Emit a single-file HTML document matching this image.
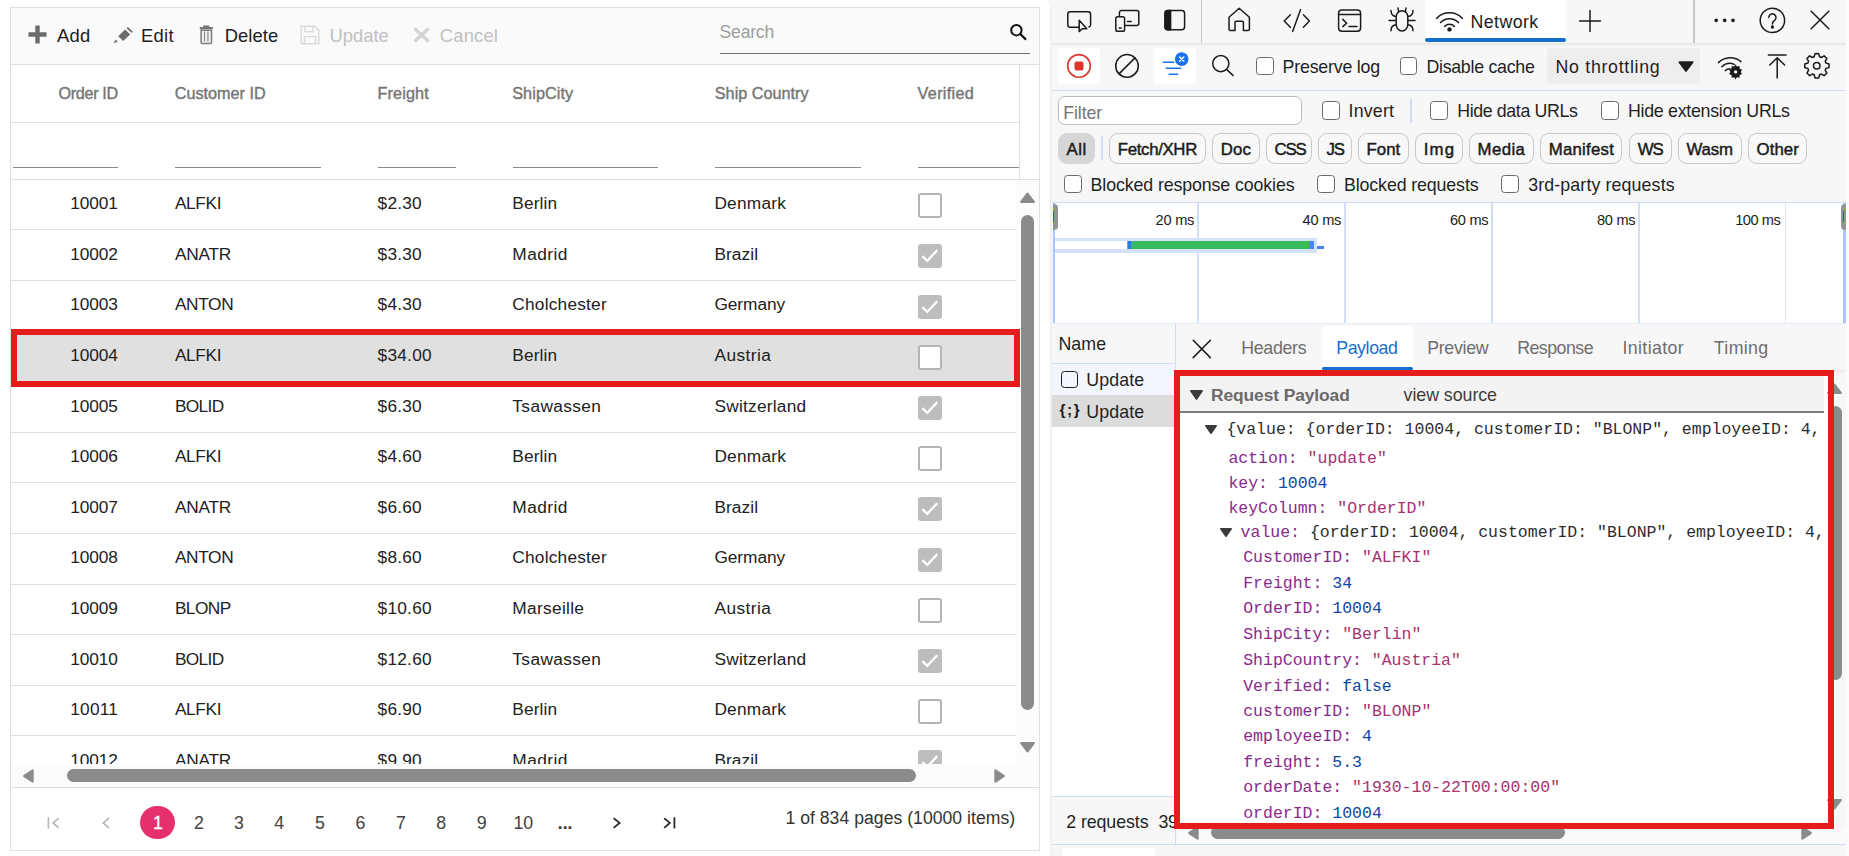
<!DOCTYPE html>
<html lang="en"><head><meta charset="utf-8"><title>Grid update - network payload</title>
<style>
html,body{margin:0;padding:0;background:#fff;}
body{width:1849px;height:856px;overflow:hidden;position:relative;font-family:"Liberation Sans", Arial, sans-serif;}
#root{position:absolute;left:0;top:0;width:1849px;height:856px;overflow:hidden;}
#root div{position:absolute;box-sizing:border-box;}
#root svg{position:absolute;overflow:visible;}
.t{position:absolute;white-space:pre;line-height:30px;height:30px;}

</style></head>
<body>
<div id="root">
<div style="left:0px;top:0px;width:1052px;height:856px;background:#fff;"></div>
<div style="left:10px;top:7px;width:1030px;height:844px;border:1px solid #e0e0e0;background:#fff;"></div>
<div style="left:11px;top:8px;width:1028px;height:56px;background:#fafafa;"></div>
<div style="left:11px;top:64px;width:1028px;height:1px;background:#e0e0e0;"></div>
<div style="left:11px;top:122px;width:1008px;height:1px;background:#e0e0e0;"></div>
<div style="left:11px;top:179px;width:1028px;height:1px;background:#e0e0e0;"></div>
<div style="left:1019px;top:65px;width:1px;height:115px;background:#e0e0e0;"></div>
<span class="t" style="left:57.0px;top:20.8px;font-size:18.4px;color:#212121;letter-spacing:0.283px;">Add</span>
<span class="t" style="left:141.0px;top:20.8px;font-size:18.4px;color:#212121;letter-spacing:0.266px;">Edit</span>
<span class="t" style="left:224.7px;top:20.8px;font-size:18.4px;color:#212121;letter-spacing:0.086px;">Delete</span>
<span class="t" style="left:329.5px;top:20.8px;font-size:18.4px;color:#c0c0c0;">Update</span>
<span class="t" style="left:439.8px;top:20.8px;font-size:18.4px;color:#c0c0c0;letter-spacing:0.170px;">Cancel</span>
<svg style="left:28px;top:25px" width="19" height="19" viewBox="0 0 19 19"><path d="M7.3 0.5h4.4v6.8h6.8v4.4h-6.8v6.8H7.3v-6.8H0.5V7.3h6.8z" fill="#6b6b6b"/></svg>
<svg style="left:112px;top:25px" width="22" height="20" viewBox="0 0 22 20"><path d="M6.2 11.2 L13.2 4.6 L18.2 9.4 L11.2 16 Z" fill="#6b6b6b"/><path d="M14.6 3.2 L15.9 2 L20.8 6.8 L19.6 8 Z" fill="#6b6b6b"/><path d="M4.8 12.8 L9.4 17.2 L2.2 18.6 Z" fill="#6b6b6b" opacity="0.0"/><path d="M1.6 18.4 L3.6 14.4 L5.6 16.6 Z" fill="#6b6b6b"/></svg>
<svg style="left:198px;top:24px" width="17" height="21" viewBox="0 0 17 21"><path d="M5.2 1.6h6.2v1.5h3.4v2.1H1.8V3.1h3.4z" fill="#757575"/><path d="M3.1 6.2h10.4v12.3a.9.9 0 0 1-.9.9H4a.9.9 0 0 1-.9-.9z" fill="#f2f2f2" stroke="#7d7d7d" stroke-width="1.5"/><path d="M6.55 7.6v10M9.95 7.6v10" stroke="#8a8a8a" stroke-width="1.2"/></svg>
<svg style="left:300px;top:25px" width="20" height="20" viewBox="0 0 20 20" fill="none" stroke="#dadada" stroke-width="1.4"><path d="M1.2 1.2h13.6l4 4v13.6H1.2z"/><path d="M5 1.2v5.6h8V1.2"/><path d="M4.4 18.6v-7h11.2v7"/></svg>
<svg style="left:412px;top:26px" width="19" height="18" viewBox="0 0 19 18"><path d="M2.6 2.4 L16.6 15.6M16.6 2.4 L2.6 15.6" stroke="#d4d4d4" stroke-width="3.4" fill="none"/></svg>
<span class="t" style="left:719.6px;top:16.5px;font-size:17.6px;color:#9e9e9e;letter-spacing:-0.230px;">Search</span>
<div style="left:720px;top:53px;width:310px;height:1px;background:#757575;"></div>
<svg style="left:1009px;top:23px" width="19" height="18" viewBox="0 0 19 18" fill="none" stroke="#111" stroke-width="2"><circle cx="7.4" cy="7.2" r="5.2"/><path d="M11.2 11 L17 16.6" stroke-width="2.2"/></svg>
<span class="t" style="left:58.6px;top:78.2px;font-size:16.2px;color:#757575;letter-spacing:-0.354px;-webkit-text-stroke:0.4px #757575;">Order ID</span>
<span class="t" style="left:174.8px;top:78.2px;font-size:16.2px;color:#757575;-webkit-text-stroke:0.4px #757575;">Customer ID</span>
<span class="t" style="left:377.4px;top:78.2px;font-size:16.2px;color:#757575;letter-spacing:0.168px;-webkit-text-stroke:0.4px #757575;">Freight</span>
<span class="t" style="left:512.2px;top:78.2px;font-size:16.2px;color:#757575;letter-spacing:0.103px;-webkit-text-stroke:0.4px #757575;">ShipCity</span>
<span class="t" style="left:714.8px;top:78.2px;font-size:16.2px;color:#757575;letter-spacing:0.020px;-webkit-text-stroke:0.4px #757575;">Ship Country</span>
<span class="t" style="left:917.6px;top:78.2px;font-size:16.2px;color:#757575;letter-spacing:0.314px;-webkit-text-stroke:0.4px #757575;">Verified</span>
<div style="left:13px;top:167px;width:105px;height:1px;background:#8a8a8a;"></div>
<div style="left:175px;top:167px;width:145.5px;height:1px;background:#8a8a8a;"></div>
<div style="left:378px;top:167px;width:77.69999999999999px;height:1px;background:#8a8a8a;"></div>
<div style="left:513px;top:167px;width:144.60000000000002px;height:1px;background:#8a8a8a;"></div>
<div style="left:715px;top:167px;width:146px;height:1px;background:#8a8a8a;"></div>
<div style="left:918px;top:167px;width:101px;height:1px;background:#8a8a8a;"></div>
<div style="left:11px;top:180px;width:1005px;height:584px;overflow:hidden;"><div style="left:0;top:49.4px;width:1006px;height:1px;background:#e0e0e0;"></div><div style="left:907px;top:13.4px;width:24px;height:24.6px;border-radius:3px;background:#fff;border:2px solid #b4b4b4;"></div><div style="left:0;top:100.0px;width:1006px;height:1px;background:#e0e0e0;"></div><div style="left:907px;top:64.0px;width:24px;height:24px;border-radius:3px;background:#bdbdbd;"></div><svg style="left:907px;top:64.0px" width="24" height="24" viewBox="0 0 24 24"><path d="M4.4 12.2 L9.3 16.8 L19.2 6.2" fill="none" stroke="#fff" stroke-width="2.3"/></svg><div style="left:0;top:150.6px;width:1006px;height:1px;background:#e0e0e0;"></div><div style="left:907px;top:114.6px;width:24px;height:24px;border-radius:3px;background:#bdbdbd;"></div><svg style="left:907px;top:114.6px" width="24" height="24" viewBox="0 0 24 24"><path d="M4.4 12.2 L9.3 16.8 L19.2 6.2" fill="none" stroke="#fff" stroke-width="2.3"/></svg><div style="left:0;top:150.6px;width:1006px;height:51.2px;background:#e0e0e0;"></div><div style="left:0;top:201.2px;width:1006px;height:1px;background:#e0e0e0;"></div><div style="left:907px;top:165.2px;width:24px;height:24.6px;border-radius:3px;background:#fff;border:2px solid #b4b4b4;"></div><div style="left:0;top:251.8px;width:1006px;height:1px;background:#e0e0e0;"></div><div style="left:907px;top:215.8px;width:24px;height:24px;border-radius:3px;background:#bdbdbd;"></div><svg style="left:907px;top:215.8px" width="24" height="24" viewBox="0 0 24 24"><path d="M4.4 12.2 L9.3 16.8 L19.2 6.2" fill="none" stroke="#fff" stroke-width="2.3"/></svg><div style="left:0;top:302.4px;width:1006px;height:1px;background:#e0e0e0;"></div><div style="left:907px;top:266.4px;width:24px;height:24.6px;border-radius:3px;background:#fff;border:2px solid #b4b4b4;"></div><div style="left:0;top:353.0px;width:1006px;height:1px;background:#e0e0e0;"></div><div style="left:907px;top:317.0px;width:24px;height:24px;border-radius:3px;background:#bdbdbd;"></div><svg style="left:907px;top:317.0px" width="24" height="24" viewBox="0 0 24 24"><path d="M4.4 12.2 L9.3 16.8 L19.2 6.2" fill="none" stroke="#fff" stroke-width="2.3"/></svg><div style="left:0;top:403.6px;width:1006px;height:1px;background:#e0e0e0;"></div><div style="left:907px;top:367.6px;width:24px;height:24px;border-radius:3px;background:#bdbdbd;"></div><svg style="left:907px;top:367.6px" width="24" height="24" viewBox="0 0 24 24"><path d="M4.4 12.2 L9.3 16.8 L19.2 6.2" fill="none" stroke="#fff" stroke-width="2.3"/></svg><div style="left:0;top:454.2px;width:1006px;height:1px;background:#e0e0e0;"></div><div style="left:907px;top:418.2px;width:24px;height:24.6px;border-radius:3px;background:#fff;border:2px solid #b4b4b4;"></div><div style="left:0;top:504.8px;width:1006px;height:1px;background:#e0e0e0;"></div><div style="left:907px;top:468.8px;width:24px;height:24px;border-radius:3px;background:#bdbdbd;"></div><svg style="left:907px;top:468.8px" width="24" height="24" viewBox="0 0 24 24"><path d="M4.4 12.2 L9.3 16.8 L19.2 6.2" fill="none" stroke="#fff" stroke-width="2.3"/></svg><div style="left:0;top:555.4px;width:1006px;height:1px;background:#e0e0e0;"></div><div style="left:907px;top:519.4px;width:24px;height:24.6px;border-radius:3px;background:#fff;border:2px solid #b4b4b4;"></div><div style="left:0;top:606.0px;width:1006px;height:1px;background:#e0e0e0;"></div><div style="left:907px;top:570.0px;width:24px;height:24px;border-radius:3px;background:#bdbdbd;"></div><svg style="left:907px;top:570.0px" width="24" height="24" viewBox="0 0 24 24"><path d="M4.4 12.2 L9.3 16.8 L19.2 6.2" fill="none" stroke="#fff" stroke-width="2.3"/></svg></div>
<span class="t" style="left:70.3px;top:188.2px;font-size:17.3px;color:#212121;letter-spacing:-0.116px;">10001</span>
<span class="t" style="left:174.9px;top:188.2px;font-size:17.3px;color:#212121;letter-spacing:-0.358px;">ALFKI</span>
<span class="t" style="left:377.6px;top:188.2px;font-size:17.3px;color:#212121;letter-spacing:0.213px;">$2.30</span>
<span class="t" style="left:512.3px;top:188.2px;font-size:17.3px;color:#212121;letter-spacing:0.143px;">Berlin</span>
<span class="t" style="left:714.4px;top:188.2px;font-size:17.3px;color:#212121;letter-spacing:0.232px;">Denmark</span>
<span class="t" style="left:70.3px;top:238.8px;font-size:17.3px;color:#212121;letter-spacing:-0.116px;">10002</span>
<span class="t" style="left:174.9px;top:238.8px;font-size:17.3px;color:#212121;letter-spacing:-0.224px;">ANATR</span>
<span class="t" style="left:377.6px;top:238.8px;font-size:17.3px;color:#212121;letter-spacing:0.213px;">$3.30</span>
<span class="t" style="left:512.3px;top:238.8px;font-size:17.3px;color:#212121;letter-spacing:0.454px;">Madrid</span>
<span class="t" style="left:714.4px;top:238.8px;font-size:17.3px;color:#212121;letter-spacing:0.096px;">Brazil</span>
<span class="t" style="left:70.3px;top:289.4px;font-size:17.3px;color:#212121;letter-spacing:-0.116px;">10003</span>
<span class="t" style="left:174.9px;top:289.4px;font-size:17.3px;color:#212121;letter-spacing:-0.347px;">ANTON</span>
<span class="t" style="left:377.6px;top:289.4px;font-size:17.3px;color:#212121;letter-spacing:0.213px;">$4.30</span>
<span class="t" style="left:512.3px;top:289.4px;font-size:17.3px;color:#212121;letter-spacing:0.218px;">Cholchester</span>
<span class="t" style="left:714.4px;top:289.4px;font-size:17.3px;color:#212121;letter-spacing:-0.046px;">Germany</span>
<span class="t" style="left:70.3px;top:340.0px;font-size:17.3px;color:#212121;letter-spacing:-0.116px;">10004</span>
<span class="t" style="left:174.9px;top:340.0px;font-size:17.3px;color:#212121;letter-spacing:-0.358px;">ALFKI</span>
<span class="t" style="left:377.6px;top:340.0px;font-size:17.3px;color:#212121;letter-spacing:0.228px;">$34.00</span>
<span class="t" style="left:512.3px;top:340.0px;font-size:17.3px;color:#212121;letter-spacing:0.143px;">Berlin</span>
<span class="t" style="left:714.4px;top:340.0px;font-size:17.3px;color:#212121;letter-spacing:0.467px;">Austria</span>
<span class="t" style="left:70.3px;top:390.6px;font-size:17.3px;color:#212121;letter-spacing:-0.116px;">10005</span>
<span class="t" style="left:174.9px;top:390.6px;font-size:17.3px;color:#212121;letter-spacing:-0.644px;">BOLID</span>
<span class="t" style="left:377.6px;top:390.6px;font-size:17.3px;color:#212121;letter-spacing:0.213px;">$6.30</span>
<span class="t" style="left:512.3px;top:390.6px;font-size:17.3px;color:#212121;letter-spacing:0.400px;">Tsawassen</span>
<span class="t" style="left:714.4px;top:390.6px;font-size:17.3px;color:#212121;letter-spacing:0.247px;">Switzerland</span>
<span class="t" style="left:70.3px;top:441.2px;font-size:17.3px;color:#212121;letter-spacing:-0.116px;">10006</span>
<span class="t" style="left:174.9px;top:441.2px;font-size:17.3px;color:#212121;letter-spacing:-0.358px;">ALFKI</span>
<span class="t" style="left:377.6px;top:441.2px;font-size:17.3px;color:#212121;letter-spacing:0.213px;">$4.60</span>
<span class="t" style="left:512.3px;top:441.2px;font-size:17.3px;color:#212121;letter-spacing:0.143px;">Berlin</span>
<span class="t" style="left:714.4px;top:441.2px;font-size:17.3px;color:#212121;letter-spacing:0.232px;">Denmark</span>
<span class="t" style="left:70.3px;top:491.8px;font-size:17.3px;color:#212121;letter-spacing:-0.116px;">10007</span>
<span class="t" style="left:174.9px;top:491.8px;font-size:17.3px;color:#212121;letter-spacing:-0.224px;">ANATR</span>
<span class="t" style="left:377.6px;top:491.8px;font-size:17.3px;color:#212121;letter-spacing:0.213px;">$6.60</span>
<span class="t" style="left:512.3px;top:491.8px;font-size:17.3px;color:#212121;letter-spacing:0.454px;">Madrid</span>
<span class="t" style="left:714.4px;top:491.8px;font-size:17.3px;color:#212121;letter-spacing:0.096px;">Brazil</span>
<span class="t" style="left:70.3px;top:542.4px;font-size:17.3px;color:#212121;letter-spacing:-0.116px;">10008</span>
<span class="t" style="left:174.9px;top:542.4px;font-size:17.3px;color:#212121;letter-spacing:-0.347px;">ANTON</span>
<span class="t" style="left:377.6px;top:542.4px;font-size:17.3px;color:#212121;letter-spacing:0.213px;">$8.60</span>
<span class="t" style="left:512.3px;top:542.4px;font-size:17.3px;color:#212121;letter-spacing:0.218px;">Cholchester</span>
<span class="t" style="left:714.4px;top:542.4px;font-size:17.3px;color:#212121;letter-spacing:-0.046px;">Germany</span>
<span class="t" style="left:70.3px;top:593.0px;font-size:17.3px;color:#212121;letter-spacing:-0.116px;">10009</span>
<span class="t" style="left:174.9px;top:593.0px;font-size:17.3px;color:#212121;letter-spacing:-0.548px;">BLONP</span>
<span class="t" style="left:377.6px;top:593.0px;font-size:17.3px;color:#212121;letter-spacing:0.228px;">$10.60</span>
<span class="t" style="left:512.3px;top:593.0px;font-size:17.3px;color:#212121;letter-spacing:0.318px;">Marseille</span>
<span class="t" style="left:714.4px;top:593.0px;font-size:17.3px;color:#212121;letter-spacing:0.467px;">Austria</span>
<span class="t" style="left:70.3px;top:643.6px;font-size:17.3px;color:#212121;letter-spacing:-0.116px;">10010</span>
<span class="t" style="left:174.9px;top:643.6px;font-size:17.3px;color:#212121;letter-spacing:-0.644px;">BOLID</span>
<span class="t" style="left:377.6px;top:643.6px;font-size:17.3px;color:#212121;letter-spacing:0.228px;">$12.60</span>
<span class="t" style="left:512.3px;top:643.6px;font-size:17.3px;color:#212121;letter-spacing:0.400px;">Tsawassen</span>
<span class="t" style="left:714.4px;top:643.6px;font-size:17.3px;color:#212121;letter-spacing:0.247px;">Switzerland</span>
<span class="t" style="left:70.3px;top:694.2px;font-size:17.3px;color:#212121;letter-spacing:0.205px;">10011</span>
<span class="t" style="left:174.9px;top:694.2px;font-size:17.3px;color:#212121;letter-spacing:-0.358px;">ALFKI</span>
<span class="t" style="left:377.6px;top:694.2px;font-size:17.3px;color:#212121;letter-spacing:0.213px;">$6.90</span>
<span class="t" style="left:512.3px;top:694.2px;font-size:17.3px;color:#212121;letter-spacing:0.143px;">Berlin</span>
<span class="t" style="left:714.4px;top:694.2px;font-size:17.3px;color:#212121;letter-spacing:0.232px;">Denmark</span>
<span class="t" style="left:70.3px;top:744.8px;font-size:17.3px;color:#212121;letter-spacing:-0.116px;">10012</span>
<span class="t" style="left:174.9px;top:744.8px;font-size:17.3px;color:#212121;letter-spacing:-0.224px;">ANATR</span>
<span class="t" style="left:377.6px;top:744.8px;font-size:17.3px;color:#212121;letter-spacing:0.213px;">$9.90</span>
<span class="t" style="left:512.3px;top:744.8px;font-size:17.3px;color:#212121;letter-spacing:0.454px;">Madrid</span>
<span class="t" style="left:714.4px;top:744.8px;font-size:17.3px;color:#212121;letter-spacing:0.096px;">Brazil</span>
<div style="left:1016px;top:180px;width:23px;height:607px;background:#fcfcfc;"></div>
<div style="left:11px;top:764px;width:1028px;height:23px;background:#fcfcfc;"></div>
<div style="left:1021px;top:215px;width:13px;height:495.4px;background:#8b8b8b;border-radius:7px;"></div>
<svg style="left:1019px;top:192px" width="17" height="12" viewBox="0 0 17 12"><path d="M8.5 1.6 L14.8 10 L2.2 10 Z" fill="#8b8b8b" stroke="#8b8b8b" stroke-linejoin="round" stroke-width="2.2"/></svg>
<svg style="left:1019px;top:741px" width="17" height="12" viewBox="0 0 17 12"><path d="M8.5 10.4 L14.8 2 L2.2 2 Z" fill="#8b8b8b" stroke="#8b8b8b" stroke-linejoin="round" stroke-width="2.2"/></svg>
<div style="left:67px;top:768.9px;width:849px;height:12.9px;background:#8b8b8b;border-radius:7px;"></div>
<svg style="left:22px;top:768px" width="13" height="16" viewBox="0 0 13 16"><path d="M2.2 8 L10.6 2.4 L10.6 13.6 Z" fill="#8b8b8b" stroke="#8b8b8b" stroke-linejoin="round" stroke-width="2.2"/></svg>
<svg style="left:993px;top:768px" width="13" height="16" viewBox="0 0 13 16"><path d="M10.8 8 L2.4 2.4 L2.4 13.6 Z" fill="#8b8b8b" stroke="#8b8b8b" stroke-linejoin="round" stroke-width="2.2"/></svg>
<div style="left:11px;top:787px;width:1028px;height:1px;background:#e0e0e0;"></div>
<div style="left:140.2px;top:805.6px;width:34.6px;height:33.6px;background:#e5306d;border-radius:50%;"></div>
<span class="t" style="left:152.9px;top:808.0px;font-size:17.8px;color:#fff;-webkit-text-stroke:0.3px #fff;">1</span>
<span class="t" style="left:193.9px;top:808.0px;font-size:17.8px;color:#424242;">2</span>
<span class="t" style="left:233.9px;top:808.0px;font-size:17.8px;color:#424242;">3</span>
<span class="t" style="left:274.3px;top:808.0px;font-size:17.8px;color:#424242;">4</span>
<span class="t" style="left:314.9px;top:808.0px;font-size:17.8px;color:#424242;">5</span>
<span class="t" style="left:355.5px;top:808.0px;font-size:17.8px;color:#424242;">6</span>
<span class="t" style="left:395.9px;top:808.0px;font-size:17.8px;color:#424242;">7</span>
<span class="t" style="left:436.3px;top:808.0px;font-size:17.8px;color:#424242;">8</span>
<span class="t" style="left:476.7px;top:808.0px;font-size:17.8px;color:#424242;">9</span>
<span class="t" style="left:513.6px;top:808.0px;font-size:17.8px;color:#424242;letter-spacing:-0.181px;">10</span>
<span class="t" style="left:557.5px;top:808.2px;font-size:19px;color:#424242;font-weight:700;letter-spacing:-0.38px;">...</span>
<svg style="left:40px;top:810px" width="26" height="26" viewBox="0 0 26 26" fill="none" stroke="#b8b8b8" stroke-width="1.7"><path d="M8.4 7.3v11.4"/><path d="M18.7 8.1 L13 13 L18.7 17.9"/></svg>
<svg style="left:95px;top:810px" width="26" height="26" viewBox="0 0 26 26" fill="none" stroke="#b8b8b8" stroke-width="1.7"><path d="M14 8.1 L8.2 13 L14 17.9"/></svg>
<svg style="left:605px;top:810px" width="26" height="26" viewBox="0 0 26 26" fill="none" stroke="#2a2a2a" stroke-width="1.8"><path d="M8.6 8.2 L14.6 12.9 L8.6 17.9"/></svg>
<svg style="left:655px;top:810px" width="26" height="26" viewBox="0 0 26 26" fill="none" stroke="#2a2a2a" stroke-width="1.8"><path d="M9.2 8.2 L14.8 12.9 L9.2 17.9"/><path d="M19.4 7.3v11.1"/></svg>
<span class="t" style="left:785.4px;top:803.4px;font-size:17.6px;color:#333;letter-spacing:0.034px;">1 of 834 pages (10000 items)</span>
<div style="left:11px;top:328.6px;width:1009px;height:58.6px;border:6px solid #e51c1c;"></div>
<div style="left:1040px;top:0px;width:13px;height:20px;background:#f5f5f5;"></div>
<div style="left:1040px;top:0px;width:10.2px;height:40px;background:#fff;border-radius:0 6px 0 0;"></div>
<div style="left:1050px;top:6px;width:2.4px;height:850px;background:#f0f0f0;"></div>
<div style="left:1052px;top:0px;width:797px;height:856px;background:#f7f7f7;"></div>
<div style="left:1846px;top:0px;width:3px;height:856px;background:#fbfbfb;"></div>
<div style="left:1052px;top:0px;width:794px;height:43px;background:#f7f7f7;"></div>
<div style="left:1052px;top:43px;width:794px;height:4px;background:linear-gradient(180deg,#e4e4e4,#f2f2f2 60%,#f7f7f7);"></div>
<div style="left:1200.6px;top:0px;width:1.4px;height:43px;background:#c9c9c9;"></div>
<div style="left:1693.4px;top:0px;width:1.6px;height:43px;background:#c6c6c6;"></div>
<div style="left:1425px;top:0px;width:141px;height:42px;background:#fff;border-radius:0 0 3px 3px;"></div>
<div style="left:1425px;top:38px;width:141px;height:4px;background:#1470cc;border-radius:2px;"></div>
<svg style="left:1064px;top:6px" width="30" height="30" viewBox="0 0 30 30" fill="none" stroke="#1b1b1b" stroke-width="1.5" stroke-linecap="round" stroke-linejoin="round" ><path d="M15.5 21.2H6.2a2.4 2.4 0 0 1-2.4-2.4V8.2a2.4 2.4 0 0 1 2.4-2.4h18a2.4 2.4 0 0 1 2.4 2.4v10.6a2.4 2.4 0 0 1-1.6 2.2"/><path d="M15.2 14.2v11.4l3-2.9h4.6z" fill="#f7f7f7"/></svg>
<svg style="left:1112px;top:6px" width="30" height="30" viewBox="0 0 30 30" fill="none" stroke="#1b1b1b" stroke-width="1.5" stroke-linecap="round" stroke-linejoin="round" ><path d="M7.4 9.6V6.6a2 2 0 0 1 2-2h15.4a2 2 0 0 1 2 2v11a2 2 0 0 1-2 2H13"/><rect x="3.8" y="10.8" width="8.8" height="14.4" rx="1.8" fill="#f7f7f7"/><path d="M7.2 22h2M15.6 15.6h3.6"/></svg>
<svg style="left:1160px;top:6px" width="30" height="30" viewBox="0 0 30 30" fill="none" stroke="#1b1b1b" stroke-width="1.5" stroke-linecap="round" stroke-linejoin="round" ><rect x="5" y="4.4" width="19.6" height="19.4" rx="3"/><path d="M8 4.4h2.6v19.4H8a3 3 0 0 1-3-3V7.4a3 3 0 0 1 3-3z" fill="#1b1b1b"/></svg>
<svg style="left:1224px;top:4px" width="30" height="30" viewBox="0 0 30 30" fill="none" stroke="#1b1b1b" stroke-width="1.5" stroke-linecap="round" stroke-linejoin="round" ><path d="M5 13.2 L15.2 4.2 L25.4 13.2 V25.2a1.2 1.2 0 0 1-1.2 1.2H19.4V18.4a1.2 1.2 0 0 0-1.2-1.2H12.2a1.2 1.2 0 0 0-1.2 1.2V26.4H6.2A1.2 1.2 0 0 1 5 25.2Z"/></svg>
<svg style="left:1281px;top:6px" width="32" height="30" viewBox="0 0 32 30" fill="none" stroke="#1b1b1b" stroke-width="1.5" stroke-linecap="round" stroke-linejoin="round" ><path d="M9.4 8.8 L3.2 15 L9.4 21.2M22.4 8.8 L28.4 15 L22.4 21.2M19.6 3.6 L11.6 25.4"/></svg>
<svg style="left:1335px;top:6px" width="30" height="30" viewBox="0 0 30 30" fill="none" stroke="#1b1b1b" stroke-width="1.5" stroke-linecap="round" stroke-linejoin="round" ><rect x="3.6" y="4" width="22" height="21.2" rx="3.2"/><path d="M3.6 8.4h22M7.8 13.4 L11.6 17.2 L7.8 20.6M14 20.4h8"/></svg>
<svg style="left:1386px;top:4px" width="32" height="30" viewBox="0 0 32 30" fill="none" stroke="#1b1b1b" stroke-width="1.5" stroke-linecap="round" stroke-linejoin="round" ><path d="M10.2 12.8a5.8 6 0 0 1 11.6 0v7.6a5.8 6.6 0 0 1-11.6 0z"/><path d="M12.6 7.6 L12 4M19.4 7.6 L20 4M10.2 16.6H3M21.8 16.6H29M10.2 12.6 C6.4 12.4 5 10.4 5 6.6M21.8 12.6 C25.6 12.4 27 10.4 27 6.6M10.4 20.8 C6.4 21 5 23 5 26.8M21.6 20.8 C25.6 21 27 23 27 26.8"/></svg>
<svg style="left:1434px;top:8px" width="32" height="26" viewBox="0 0 32 26" fill="none" stroke="#1b1b1b" stroke-width="1.5" stroke-linecap="round" stroke-linejoin="round" stroke-width="1.95"><path d="M2.6 10.4a17.6 17.6 0 0 1 25.8 0M6.6 14.6a12 12 0 0 1 17.8 0M10.6 18.4a6.6 6.6 0 0 1 9.8 0"/><circle cx="15.5" cy="21.4" r="2.2" fill="#1b1b1b" stroke="none"/></svg>
<span class="t" style="left:1470.6px;top:6.6px;font-size:17.8px;color:#1b1b1b;letter-spacing:0.397px;">Network</span>
<svg style="left:1578px;top:9px" width="24" height="24" viewBox="0 0 24 24" fill="none" stroke="#1b1b1b" stroke-width="1.5" stroke-linecap="round" stroke-linejoin="round" ><path d="M12 1.6v20.8M1.6 12h20.8"/></svg>
<svg style="left:1712px;top:16px" width="26" height="9" viewBox="0 0 26 9"><circle cx="4.2" cy="4.4" r="1.8" fill="#1b1b1b"/><circle cx="12.7" cy="4.4" r="1.8" fill="#1b1b1b"/><circle cx="21" cy="4.4" r="1.8" fill="#1b1b1b"/></svg>
<svg style="left:1758px;top:6px" width="30" height="30" viewBox="0 0 30 30" fill="none" stroke="#1b1b1b" stroke-width="1.5" stroke-linecap="round" stroke-linejoin="round" stroke-width="1.35"><circle cx="14.4" cy="14.4" r="12.2"/><path d="M10.8 11.4a3.6 3.6 0 1 1 5.8 2.9c-1.4 1.1-2.2 1.7-2.2 3.7"/><circle cx="14.4" cy="21" r="0.9" fill="#1b1b1b"/></svg>
<svg style="left:1809px;top:9px" width="22" height="22" viewBox="0 0 22 22" fill="none" stroke="#1b1b1b" stroke-width="1.5" stroke-linecap="round" stroke-linejoin="round" ><path d="M2.2 2.2 L19.8 19.8M19.8 2.2 L2.2 19.8"/></svg>
<div style="left:1058px;top:48.3px;width:42px;height:35.5px;background:#fff;border-radius:3px;"></div>
<svg style="left:1066px;top:53px" width="26" height="26" viewBox="0 0 26 26"><circle cx="13" cy="12.9" r="11.3" fill="none" stroke="#dc362e" stroke-width="1.6"/><rect x="8.5" y="8.4" width="9" height="9" rx="2" fill="#dc362e"/></svg>
<svg style="left:1114px;top:53px" width="26" height="26" viewBox="0 0 26 26" fill="none" stroke="#1b1b1b" stroke-width="1.5" stroke-linecap="round" stroke-linejoin="round" ><circle cx="13" cy="12.9" r="11.3"/><path d="M5 20.9 L21 4.9"/></svg>
<div style="left:1154px;top:48.3px;width:42px;height:35.5px;background:#fff;border-radius:3px;"></div>
<svg style="left:1160px;top:50px" width="32" height="30" viewBox="0 0 32 30"><path d="M3.2 12.2h10.6M6.2 18.2h14.6M9.2 24.2h8.4" stroke="#1a73e8" stroke-width="1.5" stroke-linecap="round" fill="none"/><circle cx="21.7" cy="9.1" r="6.8" fill="#1a73e8"/><path d="M19.6 7 L23.8 11.2M23.8 7 L19.6 11.2" stroke="#fff" stroke-width="1.4" stroke-linecap="round" fill="none"/></svg>
<svg style="left:1208px;top:52px" width="30" height="28" viewBox="0 0 30 28" fill="none" stroke="#1b1b1b" stroke-width="1.5" stroke-linecap="round" stroke-linejoin="round" stroke-width="1.6"><circle cx="12.8" cy="11.6" r="8.1"/><path d="M18.8 17.6 L25 23.4"/></svg>
<div style="left:1256.4px;top:57.2px;width:17.4px;height:17.4px;background:#fff;border:1.7px solid #6a6a6a;border-radius:3.5px;"></div>
<span class="t" style="left:1282.6px;top:52.0px;font-size:17.8px;color:#1f1f1f;letter-spacing:-0.203px;">Preserve log</span>
<div style="left:1400px;top:57.2px;width:17.4px;height:17.4px;background:#fff;border:1.7px solid #6a6a6a;border-radius:3.5px;"></div>
<span class="t" style="left:1426.4px;top:52.0px;font-size:17.8px;color:#1f1f1f;letter-spacing:-0.275px;">Disable cache</span>
<div style="left:1546.7px;top:48.3px;width:153.2px;height:35.5px;background:#eeeeee;border-radius:3px;"></div>
<span class="t" style="left:1555.6px;top:52.0px;font-size:17.8px;color:#1f1f1f;letter-spacing:0.677px;">No throttling</span>
<svg style="left:1677px;top:60px" width="18" height="13" viewBox="0 0 18 13"><path d="M2.4 2.2h13.2L9 11z" fill="#1b1b1b" stroke="#1b1b1b" stroke-width="1.8" stroke-linejoin="round"/></svg>
<svg style="left:1715px;top:54px" width="30" height="27" viewBox="0 0 30 27" fill="none" stroke="#1b1b1b" stroke-width="1.5" stroke-linecap="round" stroke-linejoin="round" ><path d="M3.4 8.6a17 17 0 0 1 22.6-1M6.8 12.8a11.4 11.4 0 0 1 12.4-2.4M10.4 16.6a6 6 0 0 1 4.6-1.8"/><path d="M20.4 11.8l1.3 2.3 2.6-.5.2 2.7 2.5 1-1.5 2.2 1.5 2.2-2.5 1-.2 2.7-2.6-.5-1.3 2.3-1.3-2.3-2.6.5-.2-2.7-2.5-1 1.5-2.2-1.5-2.2 2.5-1 .2-2.7 2.6.5z" fill="#1b1b1b" stroke="none" transform="translate(0.2,-1.6)"/><circle cx="20.6" cy="17.9" r="1.7" fill="#f7f7f7" stroke="none"/></svg>
<svg style="left:1765px;top:52px" width="24" height="28" viewBox="0 0 24 28" fill="none" stroke="#1b1b1b" stroke-width="1.5" stroke-linecap="round" stroke-linejoin="round" stroke-width="1.4"><path d="M3.4 2.9h17.6M12.2 26V6.4M4.8 13 L12.2 5.8 L19.6 13"/></svg>
<svg style="left:1803px;top:52px" width="28" height="28" viewBox="0 0 24 24" fill="none" stroke="#1b1b1b" stroke-width="1.3" stroke-linejoin="round"><path d="M12 1.6l1.7.2.7 2.7 1.5.6 2.4-1.4 2.3 2.3-1.4 2.4.6 1.5 2.7.7v3.2l-2.7.7-.6 1.5 1.4 2.4-2.3 2.3-2.4-1.4-1.5.6-.7 2.7h-3.2l-.7-2.7-1.5-.6-2.4 1.4-2.3-2.3 1.4-2.4-.6-1.5-2.7-.7v-3.2l2.7-.7.6-1.5-1.4-2.4 2.3-2.3 2.4 1.4 1.5-.6.7-2.7z" transform="translate(-0.2,-0.4)"/><circle cx="11.8" cy="11.8" r="2.8"/></svg>
<div style="left:1052px;top:90px;width:794px;height:1px;background:#cfdcf5;"></div>
<div style="left:1058px;top:96.1px;width:244px;height:28.5px;background:#fff;border:1.4px solid #bdbdbd;border-radius:7px;"></div>
<span class="t" style="left:1063.2px;top:98.4px;font-size:17.8px;color:#757575;letter-spacing:-0.103px;">Filter</span>
<div style="left:1321.8px;top:101.4px;width:18.2px;height:18.2px;background:#fff;border:1.7px solid #6a6a6a;border-radius:3.5px;"></div>
<span class="t" style="left:1348.6px;top:96.2px;font-size:17.8px;color:#1f1f1f;letter-spacing:0.183px;">Invert</span>
<div style="left:1410.4px;top:98.5px;width:1.4px;height:24px;background:#cfdcf5;"></div>
<div style="left:1429.8px;top:101.4px;width:18.2px;height:18.2px;background:#fff;border:1.7px solid #6a6a6a;border-radius:3.5px;"></div>
<span class="t" style="left:1457.2px;top:96.2px;font-size:17.8px;color:#1f1f1f;letter-spacing:-0.379px;">Hide data URLs</span>
<div style="left:1600.8px;top:101.4px;width:18.2px;height:18.2px;background:#fff;border:1.7px solid #6a6a6a;border-radius:3.5px;"></div>
<span class="t" style="left:1628.0px;top:96.2px;font-size:17.8px;color:#1f1f1f;letter-spacing:-0.280px;">Hide extension URLs</span>
<div style="left:1057.9px;top:133.1px;width:36.899999999999864px;height:30.8px;background:#d6d6d6;border-radius:9px;"></div>
<span class="t" style="left:1066.5px;top:134.6px;font-size:16.8px;color:#1b1b1b;letter-spacing:0.522px;-webkit-text-stroke:0.45px #1b1b1b;">All</span>
<div style="left:1109.2px;top:133.1px;width:96.70000000000005px;height:30.8px;background:#f8f8f8;border:1.2px solid #c8c8c8;border-radius:9px;"></div>
<span class="t" style="left:1117.8px;top:134.6px;font-size:16.8px;color:#1b1b1b;letter-spacing:-0.322px;-webkit-text-stroke:0.45px #1b1b1b;">Fetch/XHR</span>
<div style="left:1212.2px;top:133.1px;width:47.399999999999864px;height:30.8px;background:#f8f8f8;border:1.2px solid #c8c8c8;border-radius:9px;"></div>
<span class="t" style="left:1220.8px;top:134.6px;font-size:16.8px;color:#1b1b1b;letter-spacing:0.178px;-webkit-text-stroke:0.45px #1b1b1b;">Doc</span>
<div style="left:1266px;top:133.1px;width:45.59999999999991px;height:30.8px;background:#f8f8f8;border:1.2px solid #c8c8c8;border-radius:9px;"></div>
<span class="t" style="left:1274.6px;top:134.6px;font-size:16.8px;color:#1b1b1b;letter-spacing:-1.200px;-webkit-text-stroke:0.45px #1b1b1b;">CSS</span>
<div style="left:1318px;top:133.1px;width:33.59999999999991px;height:30.8px;background:#f8f8f8;border:1.2px solid #c8c8c8;border-radius:9px;"></div>
<span class="t" style="left:1326.6px;top:134.6px;font-size:16.8px;color:#1b1b1b;letter-spacing:-1.200px;-webkit-text-stroke:0.45px #1b1b1b;">JS</span>
<div style="left:1358px;top:133.1px;width:50.799999999999955px;height:30.8px;background:#f8f8f8;border:1.2px solid #c8c8c8;border-radius:9px;"></div>
<span class="t" style="left:1366.6px;top:134.6px;font-size:16.8px;color:#1b1b1b;-webkit-text-stroke:0.45px #1b1b1b;">Font</span>
<div style="left:1415.2px;top:133.1px;width:47.399999999999864px;height:30.8px;background:#f8f8f8;border:1.2px solid #c8c8c8;border-radius:9px;"></div>
<span class="t" style="left:1423.8px;top:134.6px;font-size:16.8px;color:#1b1b1b;letter-spacing:1.108px;-webkit-text-stroke:0.45px #1b1b1b;">Img</span>
<div style="left:1469px;top:133.1px;width:64.5px;height:30.8px;background:#f8f8f8;border:1.2px solid #c8c8c8;border-radius:9px;"></div>
<span class="t" style="left:1477.6px;top:134.6px;font-size:16.8px;color:#1b1b1b;letter-spacing:0.395px;-webkit-text-stroke:0.45px #1b1b1b;">Media</span>
<div style="left:1540.1px;top:133.1px;width:82.40000000000009px;height:30.8px;background:#f8f8f8;border:1.2px solid #c8c8c8;border-radius:9px;"></div>
<span class="t" style="left:1548.7px;top:134.6px;font-size:16.8px;color:#1b1b1b;letter-spacing:0.254px;-webkit-text-stroke:0.45px #1b1b1b;">Manifest</span>
<div style="left:1629.2px;top:133.1px;width:42.399999999999864px;height:30.8px;background:#f8f8f8;border:1.2px solid #c8c8c8;border-radius:9px;"></div>
<span class="t" style="left:1637.8px;top:134.6px;font-size:16.8px;color:#1b1b1b;letter-spacing:-1.200px;-webkit-text-stroke:0.45px #1b1b1b;">WS</span>
<div style="left:1678px;top:133.1px;width:63.5px;height:30.8px;background:#f8f8f8;border:1.2px solid #c8c8c8;border-radius:9px;"></div>
<span class="t" style="left:1686.6px;top:134.6px;font-size:16.8px;color:#1b1b1b;letter-spacing:-0.207px;-webkit-text-stroke:0.45px #1b1b1b;">Wasm</span>
<div style="left:1747.9px;top:133.1px;width:59.59999999999991px;height:30.8px;background:#f8f8f8;border:1.2px solid #c8c8c8;border-radius:9px;"></div>
<span class="t" style="left:1756.5px;top:134.6px;font-size:16.8px;color:#1b1b1b;letter-spacing:0.104px;-webkit-text-stroke:0.45px #1b1b1b;">Other</span>
<div style="left:1101.2px;top:136.3px;width:1.8px;height:23.4px;background:#cfdcf5;"></div>
<div style="left:1064px;top:175.4px;width:18px;height:18px;background:#fff;border:1.7px solid #6a6a6a;border-radius:3.5px;"></div>
<span class="t" style="left:1090.6px;top:170.4px;font-size:17.8px;color:#1f1f1f;letter-spacing:-0.112px;">Blocked response cookies</span>
<div style="left:1316.8px;top:175.4px;width:18px;height:18px;background:#fff;border:1.7px solid #6a6a6a;border-radius:3.5px;"></div>
<span class="t" style="left:1344.0px;top:170.4px;font-size:17.8px;color:#1f1f1f;letter-spacing:-0.120px;">Blocked requests</span>
<div style="left:1500.8px;top:175.4px;width:18px;height:18px;background:#fff;border:1.7px solid #6a6a6a;border-radius:3.5px;"></div>
<span class="t" style="left:1528.2px;top:170.4px;font-size:17.8px;color:#1f1f1f;letter-spacing:0.124px;">3rd-party requests</span>
<div style="left:1054px;top:202px;width:1792px;height:121px;background:#fff;width:792px;"></div>
<div style="left:1052px;top:202px;width:794px;height:1px;background:#cfdcf5;"></div>
<div style="left:1053px;top:203px;width:2px;height:120px;background:#a9c5f9;"></div>
<div style="left:1197px;top:203px;width:2.2px;height:120px;background:#d0ddf8;"></div>
<div style="left:1344px;top:203px;width:2.2px;height:120px;background:#d0ddf8;"></div>
<div style="left:1491px;top:203px;width:2.2px;height:120px;background:#d0ddf8;"></div>
<div style="left:1638px;top:203px;width:2.2px;height:120px;background:#d0ddf8;"></div>
<div style="left:1784.6px;top:203px;width:1.2px;height:120px;background:#d9e4f8;"></div>
<div style="left:1842.8px;top:203px;width:3.2px;height:120px;background:#a9c5f9;"></div>
<div style="left:1053px;top:203.7px;width:5.4px;height:26.3px;background:#949494;border-radius:0 4px 4px 0;"></div>
<div style="left:1053px;top:211px;width:1.4px;height:11px;background:#1a5fd6;"></div>
<div style="left:1840.5px;top:203.7px;width:5.5px;height:26.3px;background:#949494;border-radius:4px 0 0 4px;"></div>
<div style="left:1842.8px;top:211px;width:1.4px;height:11px;background:#1a5fd6;"></div>
<span class="t" style="left:1155.6px;top:205.0px;font-size:14.6px;color:#1b1b1b;letter-spacing:-0.237px;">20 ms</span>
<span class="t" style="left:1302.6px;top:205.0px;font-size:14.6px;color:#1b1b1b;letter-spacing:-0.237px;">40 ms</span>
<span class="t" style="left:1450.0px;top:205.0px;font-size:14.6px;color:#1b1b1b;letter-spacing:-0.288px;">60 ms</span>
<span class="t" style="left:1597.0px;top:205.0px;font-size:14.6px;color:#1b1b1b;letter-spacing:-0.288px;">80 ms</span>
<span class="t" style="left:1735.2px;top:205.0px;font-size:14.6px;color:#1b1b1b;letter-spacing:-0.452px;">100 ms</span>
<div style="left:1055px;top:238.1px;width:261.5px;height:14.8px;background:#d3e1fa;"></div>
<div style="left:1055px;top:241px;width:72px;height:7.8px;background:#fff;"></div>
<div style="left:1127px;top:241px;width:1.4px;height:7.8px;background:#9a9a9a;"></div>
<div style="left:1128.4px;top:241px;width:2.8px;height:7.8px;background:#2d7de0;"></div>
<div style="left:1131px;top:241px;width:178px;height:7.8px;background:#37bb5b;"></div>
<div style="left:1309px;top:241px;width:5px;height:7.8px;background:#4a84ec;"></div>
<div style="left:1316.5px;top:245.5px;width:7px;height:3px;background:#4a84ec;"></div>
<div style="left:1052px;top:322.6px;width:794px;height:1px;background:#e6ecf9;"></div>
<div style="left:1052px;top:323.6px;width:123px;height:40px;background:#f7f7f7;"></div>
<div style="left:1052px;top:363.2px;width:123px;height:1px;background:#cfdcf5;"></div>
<div style="left:1174.6px;top:323.6px;width:1.2px;height:521px;background:#cfdcf5;"></div>
<span class="t" style="left:1058.4px;top:329.4px;font-size:17.8px;color:#1f1f1f;letter-spacing:0.121px;">Name</span>
<div style="left:1052px;top:364.2px;width:123px;height:31px;background:#f3f6fc;"></div>
<div style="left:1061.2px;top:371px;width:16.6px;height:16.6px;border:1.5px solid #1b1b1b;border-radius:3.5px;background:#f3f6fc;"></div>
<span class="t" style="left:1086.2px;top:365.4px;font-size:17.8px;color:#1f1f1f;letter-spacing:0.131px;">Update</span>
<div style="left:1052px;top:395.2px;width:123px;height:31.6px;background:#dcdcdc;"></div>
<span class="t" style="left:1059.6px;top:395.4px;font-size:15.4px;color:#1b1b1b;font-weight:700;letter-spacing:1.500px;">{;}</span>
<span class="t" style="left:1086.2px;top:397.4px;font-size:17.8px;color:#1f1f1f;letter-spacing:0.131px;">Update</span>
<div style="left:1052px;top:426.8px;width:122.6px;height:369.4px;background:#fff;"></div>
<div style="left:1175.8px;top:323.6px;width:670px;height:46px;background:#f7f7f7;"></div>
<div style="left:1175.8px;top:369.6px;width:670px;height:3px;background:linear-gradient(180deg,#e9e9e9,#f7f7f7);"></div>
<svg style="left:1192px;top:339px" width="20" height="20" viewBox="0 0 20 20" fill="none" stroke="#1b1b1b" stroke-width="1.5" stroke-linecap="round" stroke-linejoin="round" stroke-width="1.4"><path d="M1.2 1.2 L18.4 18.6M18.4 1.2 L1.2 18.6"/></svg>
<span class="t" style="left:1241.2px;top:333.4px;font-size:17.8px;color:#6e6e6e;letter-spacing:-0.303px;">Headers</span>
<div style="left:1321.8px;top:326px;width:91px;height:43.6px;background:#fff;border-radius:4px 4px 0 0;"></div>
<div style="left:1321.8px;top:367.2px;width:91px;height:2.8px;background:#1470cc;border-radius:2px;"></div>
<span class="t" style="left:1336.2px;top:333.4px;font-size:17.8px;color:#1a6fd0;letter-spacing:-0.411px;">Payload</span>
<span class="t" style="left:1427.2px;top:333.4px;font-size:17.8px;color:#6e6e6e;letter-spacing:-0.308px;">Preview</span>
<span class="t" style="left:1517.2px;top:333.4px;font-size:17.8px;color:#6e6e6e;letter-spacing:-0.525px;">Response</span>
<span class="t" style="left:1622.4px;top:333.4px;font-size:17.8px;color:#6e6e6e;letter-spacing:0.386px;">Initiator</span>
<span class="t" style="left:1713.8px;top:333.4px;font-size:17.8px;color:#6e6e6e;letter-spacing:0.339px;">Timing</span>
<div style="left:1175.8px;top:372px;width:660px;height:456px;background:#fff;"></div>
<div style="left:1180px;top:376px;width:644px;height:36px;background:#f3f3f3;"></div>
<div style="left:1180px;top:411.2px;width:644px;height:1.8px;background:#7d7d7d;"></div>
<svg style="left:1189px;top:389px" width="15" height="12" viewBox="0 0 15 12"><path d="M1.8 1.8h11.4L7.5 10z" fill="#3b3b3b" stroke="#3b3b3b" stroke-width="1.6" stroke-linejoin="round"/></svg>
<span class="t" style="left:1211.0px;top:379.8px;font-size:17.4px;color:#6a6a6a;font-weight:700;letter-spacing:-0.096px;">Request Payload</span>
<span class="t" style="left:1403.6px;top:379.8px;font-size:17.8px;color:#3c3c3c;letter-spacing:-0.049px;">view source</span>
<svg style="left:1204px;top:424px" width="14" height="11" viewBox="0 0 14 11"><path d="M1.8 1.8h10.4L7 9.2z" fill="#3b3b3b" stroke="#3b3b3b" stroke-width="1.6" stroke-linejoin="round"/></svg>
<span class="t" style="left:1226.4px;top:414.7px;font-size:16.5px;color:#2d2d2d;font-family:'Liberation Mono', 'DejaVu Sans Mono', monospace;">{value: {orderID: 10004, customerID: &quot;BLONP&quot;, employeeID: 4,</span>
<span class="t" style="left:1228.4px;top:443.5px;font-size:16.5px;color:#8a2a8c;font-family:'Liberation Mono', 'DejaVu Sans Mono', monospace;">action</span>
<span class="t" style="left:1287.8px;top:443.5px;font-size:16.5px;color:#8a2a8c;font-family:'Liberation Mono', 'DejaVu Sans Mono', monospace;letter-spacing:-0.021px;">: </span>
<span class="t" style="left:1307.6px;top:443.5px;font-size:16.5px;color:#a8326f;font-family:'Liberation Mono', 'DejaVu Sans Mono', monospace;">&quot;update&quot;</span>
<span class="t" style="left:1228.4px;top:468.5px;font-size:16.5px;color:#8a2a8c;font-family:'Liberation Mono', 'DejaVu Sans Mono', monospace;letter-spacing:-0.015px;">key</span>
<span class="t" style="left:1258.1px;top:468.5px;font-size:16.5px;color:#8a2a8c;font-family:'Liberation Mono', 'DejaVu Sans Mono', monospace;letter-spacing:-0.021px;">: </span>
<span class="t" style="left:1277.9px;top:468.5px;font-size:16.5px;color:#0b47a4;font-family:'Liberation Mono', 'DejaVu Sans Mono', monospace;">10004</span>
<span class="t" style="left:1228.4px;top:493.8px;font-size:16.5px;color:#8a2a8c;font-family:'Liberation Mono', 'DejaVu Sans Mono', monospace;">keyColumn</span>
<span class="t" style="left:1317.5px;top:493.8px;font-size:16.5px;color:#8a2a8c;font-family:'Liberation Mono', 'DejaVu Sans Mono', monospace;letter-spacing:-0.021px;">: </span>
<span class="t" style="left:1337.3px;top:493.8px;font-size:16.5px;color:#a8326f;font-family:'Liberation Mono', 'DejaVu Sans Mono', monospace;">&quot;OrderID&quot;</span>
<svg style="left:1219.4px;top:527.1999999999999px" width="14" height="11" viewBox="0 0 14 11"><path d="M1.8 1.8h10.4L7 9.2z" fill="#3b3b3b" stroke="#3b3b3b" stroke-width="1.6" stroke-linejoin="round"/></svg>
<span class="t" style="left:1240.6px;top:518.3px;font-size:16.5px;color:#8a2a8c;font-family:'Liberation Mono', 'DejaVu Sans Mono', monospace;">value</span>
<span class="t" style="left:1290.1px;top:518.3px;font-size:16.5px;color:#8a2a8c;font-family:'Liberation Mono', 'DejaVu Sans Mono', monospace;letter-spacing:-0.021px;">: </span>
<span class="t" style="left:1309.9px;top:518.3px;font-size:16.5px;color:#2d2d2d;font-family:'Liberation Mono', 'DejaVu Sans Mono', monospace;">{orderID: 10004, customerID: &quot;BLONP&quot;, employeeID: 4,</span>
<span class="t" style="left:1243.2px;top:543.3px;font-size:16.5px;color:#8a2a8c;font-family:'Liberation Mono', 'DejaVu Sans Mono', monospace;">CustomerID</span>
<span class="t" style="left:1342.2px;top:543.3px;font-size:16.5px;color:#8a2a8c;font-family:'Liberation Mono', 'DejaVu Sans Mono', monospace;letter-spacing:-0.021px;">: </span>
<span class="t" style="left:1362.0px;top:543.3px;font-size:16.5px;color:#a8326f;font-family:'Liberation Mono', 'DejaVu Sans Mono', monospace;">&quot;ALFKI&quot;</span>
<span class="t" style="left:1243.2px;top:568.6px;font-size:16.5px;color:#8a2a8c;font-family:'Liberation Mono', 'DejaVu Sans Mono', monospace;">Freight</span>
<span class="t" style="left:1312.5px;top:568.6px;font-size:16.5px;color:#8a2a8c;font-family:'Liberation Mono', 'DejaVu Sans Mono', monospace;letter-spacing:-0.021px;">: </span>
<span class="t" style="left:1332.3px;top:568.6px;font-size:16.5px;color:#0b47a4;font-family:'Liberation Mono', 'DejaVu Sans Mono', monospace;letter-spacing:-0.021px;">34</span>
<span class="t" style="left:1243.2px;top:593.8px;font-size:16.5px;color:#8a2a8c;font-family:'Liberation Mono', 'DejaVu Sans Mono', monospace;">OrderID</span>
<span class="t" style="left:1312.5px;top:593.8px;font-size:16.5px;color:#8a2a8c;font-family:'Liberation Mono', 'DejaVu Sans Mono', monospace;letter-spacing:-0.021px;">: </span>
<span class="t" style="left:1332.3px;top:593.8px;font-size:16.5px;color:#0b47a4;font-family:'Liberation Mono', 'DejaVu Sans Mono', monospace;">10004</span>
<span class="t" style="left:1243.2px;top:620.0px;font-size:16.5px;color:#8a2a8c;font-family:'Liberation Mono', 'DejaVu Sans Mono', monospace;">ShipCity</span>
<span class="t" style="left:1322.4px;top:620.0px;font-size:16.5px;color:#8a2a8c;font-family:'Liberation Mono', 'DejaVu Sans Mono', monospace;letter-spacing:-0.021px;">: </span>
<span class="t" style="left:1342.2px;top:620.0px;font-size:16.5px;color:#a8326f;font-family:'Liberation Mono', 'DejaVu Sans Mono', monospace;">&quot;Berlin&quot;</span>
<span class="t" style="left:1243.2px;top:645.7px;font-size:16.5px;color:#8a2a8c;font-family:'Liberation Mono', 'DejaVu Sans Mono', monospace;">ShipCountry</span>
<span class="t" style="left:1352.1px;top:645.7px;font-size:16.5px;color:#8a2a8c;font-family:'Liberation Mono', 'DejaVu Sans Mono', monospace;letter-spacing:-0.021px;">: </span>
<span class="t" style="left:1371.8px;top:645.7px;font-size:16.5px;color:#a8326f;font-family:'Liberation Mono', 'DejaVu Sans Mono', monospace;">&quot;Austria&quot;</span>
<span class="t" style="left:1243.2px;top:671.6px;font-size:16.5px;color:#8a2a8c;font-family:'Liberation Mono', 'DejaVu Sans Mono', monospace;">Verified</span>
<span class="t" style="left:1322.4px;top:671.6px;font-size:16.5px;color:#8a2a8c;font-family:'Liberation Mono', 'DejaVu Sans Mono', monospace;letter-spacing:-0.021px;">: </span>
<span class="t" style="left:1342.2px;top:671.6px;font-size:16.5px;color:#0b47a4;font-family:'Liberation Mono', 'DejaVu Sans Mono', monospace;">false</span>
<span class="t" style="left:1243.2px;top:696.8px;font-size:16.5px;color:#8a2a8c;font-family:'Liberation Mono', 'DejaVu Sans Mono', monospace;">customerID</span>
<span class="t" style="left:1342.2px;top:696.8px;font-size:16.5px;color:#8a2a8c;font-family:'Liberation Mono', 'DejaVu Sans Mono', monospace;letter-spacing:-0.021px;">: </span>
<span class="t" style="left:1362.0px;top:696.8px;font-size:16.5px;color:#a8326f;font-family:'Liberation Mono', 'DejaVu Sans Mono', monospace;">&quot;BLONP&quot;</span>
<span class="t" style="left:1243.2px;top:722.2px;font-size:16.5px;color:#8a2a8c;font-family:'Liberation Mono', 'DejaVu Sans Mono', monospace;">employeeID</span>
<span class="t" style="left:1342.2px;top:722.2px;font-size:16.5px;color:#8a2a8c;font-family:'Liberation Mono', 'DejaVu Sans Mono', monospace;letter-spacing:-0.021px;">: </span>
<span class="t" style="left:1362.0px;top:722.2px;font-size:16.5px;color:#0b47a4;font-family:'Liberation Mono', 'DejaVu Sans Mono', monospace;">4</span>
<span class="t" style="left:1243.2px;top:747.6px;font-size:16.5px;color:#8a2a8c;font-family:'Liberation Mono', 'DejaVu Sans Mono', monospace;">freight</span>
<span class="t" style="left:1312.5px;top:747.6px;font-size:16.5px;color:#8a2a8c;font-family:'Liberation Mono', 'DejaVu Sans Mono', monospace;letter-spacing:-0.021px;">: </span>
<span class="t" style="left:1332.3px;top:747.6px;font-size:16.5px;color:#0b47a4;font-family:'Liberation Mono', 'DejaVu Sans Mono', monospace;letter-spacing:-0.015px;">5.3</span>
<span class="t" style="left:1243.2px;top:773.3px;font-size:16.5px;color:#8a2a8c;font-family:'Liberation Mono', 'DejaVu Sans Mono', monospace;">orderDate</span>
<span class="t" style="left:1332.3px;top:773.3px;font-size:16.5px;color:#8a2a8c;font-family:'Liberation Mono', 'DejaVu Sans Mono', monospace;letter-spacing:-0.021px;">: </span>
<span class="t" style="left:1352.1px;top:773.3px;font-size:16.5px;color:#a8326f;font-family:'Liberation Mono', 'DejaVu Sans Mono', monospace;">&quot;1930-10-22T00:00:00&quot;</span>
<span class="t" style="left:1243.2px;top:798.8px;font-size:16.5px;color:#8a2a8c;font-family:'Liberation Mono', 'DejaVu Sans Mono', monospace;">orderID</span>
<span class="t" style="left:1312.5px;top:798.8px;font-size:16.5px;color:#8a2a8c;font-family:'Liberation Mono', 'DejaVu Sans Mono', monospace;letter-spacing:-0.021px;">: </span>
<span class="t" style="left:1332.3px;top:798.8px;font-size:16.5px;color:#0b47a4;font-family:'Liberation Mono', 'DejaVu Sans Mono', monospace;">10004</span>
<div style="left:1828.6px;top:405.8px;width:13.4px;height:274.4px;background:#8b8b8b;border-radius:7px;"></div>
<svg style="left:1826px;top:383px" width="17" height="12" viewBox="0 0 17 12"><path d="M8.5 1.6 L14.8 10 L2.2 10 Z" fill="#8b8b8b" stroke="#8b8b8b" stroke-linejoin="round" stroke-width="2.2"/></svg>
<svg style="left:1826px;top:798px" width="17" height="12" viewBox="0 0 17 12"><path d="M8.5 10.4 L14.8 2 L2.2 2 Z" fill="#8b8b8b" stroke="#8b8b8b" stroke-linejoin="round" stroke-width="2.2"/></svg>
<div style="left:1175.8px;top:828px;width:670px;height:16px;background:#fafafa;"></div>
<div style="left:1211.4px;top:826px;width:353.4px;height:12.6px;background:#8b8b8b;border-radius:7px;"></div>
<svg style="left:1187px;top:825px" width="13" height="16" viewBox="0 0 13 16"><path d="M2.2 8 L10.6 2.4 L10.6 13.6 Z" fill="#8b8b8b" stroke="#8b8b8b" stroke-linejoin="round" stroke-width="2.2"/></svg>
<svg style="left:1800px;top:825px" width="13" height="16" viewBox="0 0 13 16"><path d="M10.8 8 L2.4 2.4 L2.4 13.6 Z" fill="#8b8b8b" stroke="#8b8b8b" stroke-linejoin="round" stroke-width="2.2"/></svg>
<div style="left:1052px;top:796.2px;width:123px;height:1px;background:#cfdcf5;"></div>
<div style="left:1052px;top:797.2px;width:122.6px;height:47px;background:#f7f7f7;"></div>
<span class="t" style="left:1066.2px;top:807.2px;font-size:17.8px;color:#1f1f1f;letter-spacing:-0.070px;">2 requests</span>
<span class="t" style="left:1158.4px;top:807.2px;font-size:17.8px;color:#1f1f1f;letter-spacing:-0.181px;">39</span>
<div style="left:1175.8px;top:797px;width:2px;height:47px;background:#f7f7f7;"></div>
<div style="left:1052px;top:844px;width:794px;height:1px;background:#cfdcf5;"></div>
<div style="left:1052px;top:845px;width:794px;height:11px;background:#f6f6f6;"></div>
<div style="left:1062px;top:847.6px;width:93px;height:10px;background:#fff;border-radius:3px 3px 0 0;"></div>
<div style="left:1174px;top:370px;width:660.3px;height:458.6px;border:6px solid #e51c1c;"></div>
</div>
</body></html>
